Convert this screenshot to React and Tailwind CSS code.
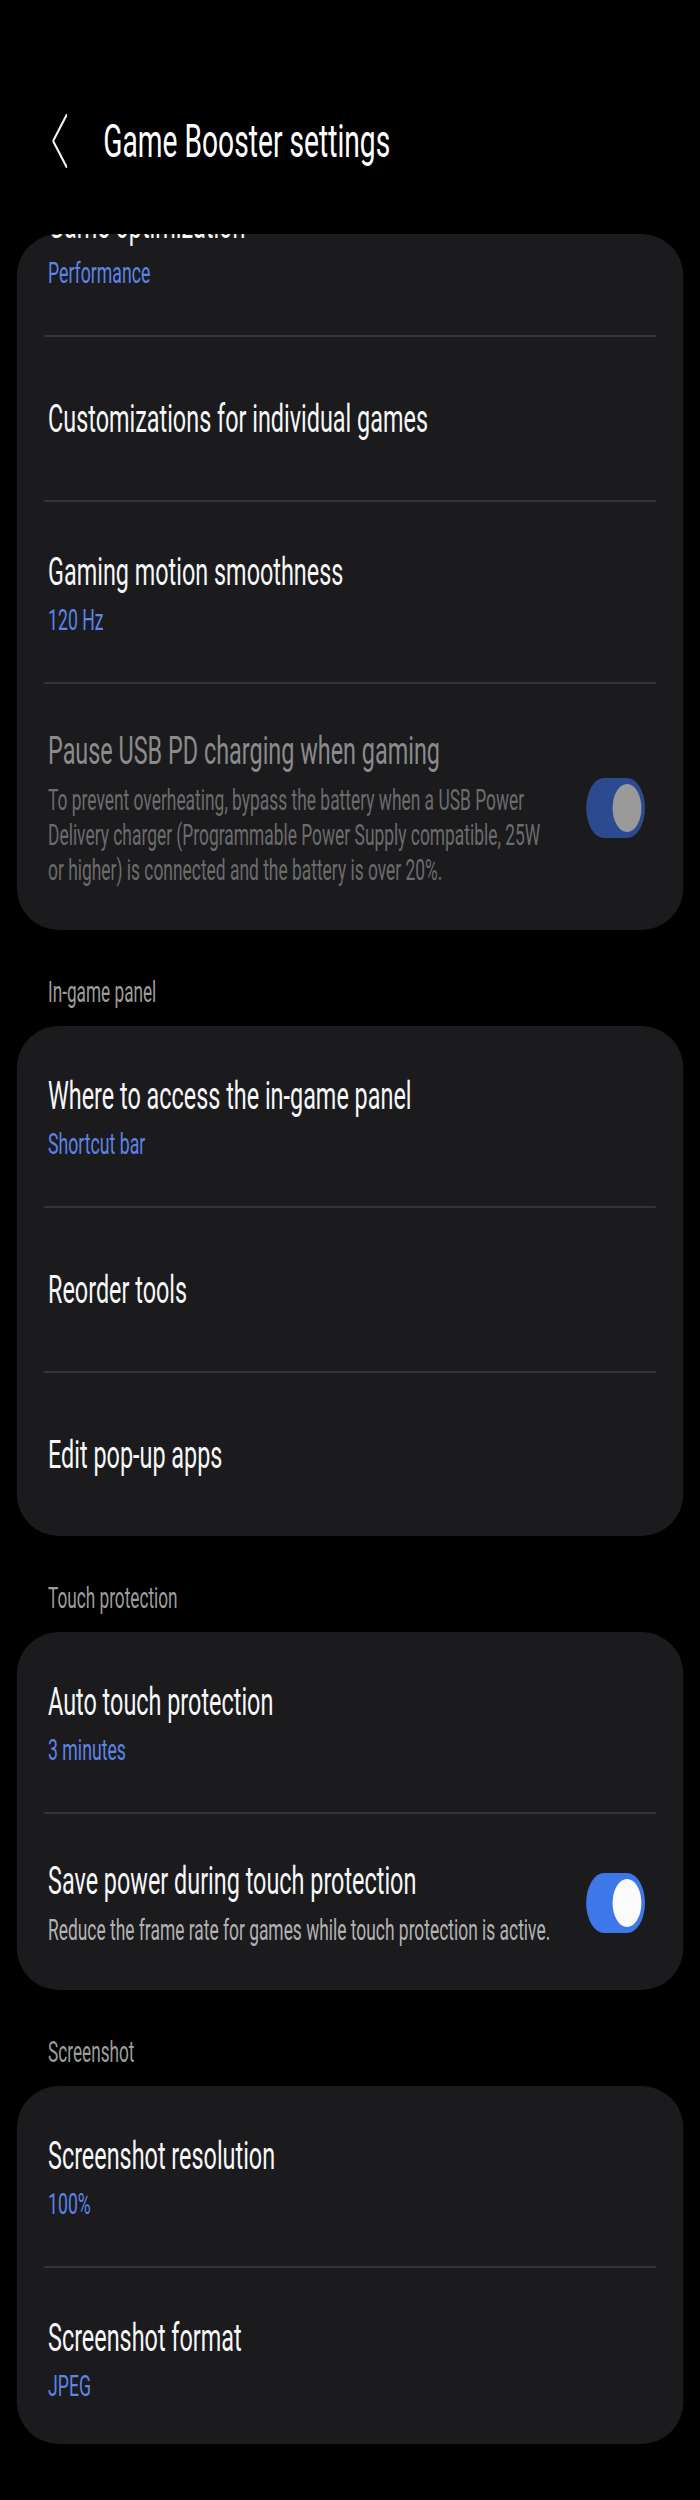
import React from 'react';

// the whole screen is drawn 1167px wide and squeezed to 700 (the reference is horizontally squashed)
const sections = [
  {
    header: null,
    clipTop: true,
    rows: [
      { title: 'Game optimization', value: 'Performance' },
      { title: 'Customizations for individual games' },
      { title: 'Gaming motion smoothness', value: '120 Hz' },
      {
        title: 'Pause USB PD charging when gaming',
        desc: 'To prevent overheating, bypass the battery when a USB Power Delivery charger (Programmable Power Supply compatible, 25W or higher) is connected and the battery is over 20%.',
        toggle: true,
        disabled: true,
      },
    ],
  },
  {
    header: 'In-game panel',
    rows: [
      { title: 'Where to access the in-game panel', value: 'Shortcut bar' },
      { title: 'Reorder tools' },
      { title: 'Edit pop-up apps' },
    ],
  },
  {
    header: 'Touch protection',
    rows: [
      { title: 'Auto touch protection', value: '3 minutes' },
      {
        title: 'Save power during touch protection',
        desc: 'Reduce the frame rate for games while touch protection is active.',
        toggle: true,
      },
    ],
  },
  {
    header: 'Screenshot',
    rows: [
      { title: 'Screenshot resolution', value: '100%' },
      { title: 'Screenshot format', value: 'JPEG', last: true },
    ],
  },
];

function Toggle({ disabled }) {
  return (
    <div
      className={`flex h-[60px] w-[98px] shrink-0 items-center justify-end rounded-full pr-[6px] ${
        disabled ? 'bg-[#2b4a90]' : 'bg-[#3d77ea]'
      }`}
    >
      <div className={`h-[48px] w-[48px] rounded-full ${disabled ? 'bg-[#9a9a9a]' : 'bg-[#fbfbfb]'}`} />
    </div>
  );
}

function Row({ title, value, desc, toggle, disabled, last }) {
  let pad = 'pt-[58px] pb-[57px]';
  if (desc) pad = 'pt-[43px] pb-[42px]';
  else if (value) pad = last ? 'pt-[46px] pb-[34px]' : 'pt-[46px] pb-[38px]';
  return (
    <div className={`flex items-center pl-[52px] pr-[64px] ${pad}`}>
      <div className="flex-1">
        <p className={`text-[39px] leading-[48px] ${disabled ? 'text-[#8b8b8b]' : 'text-[#f7f7f7]'}`}>{title}</p>
        {value && <p className="text-[29.5px] leading-[48px] text-[#5d84e6]">{value}</p>}
        {desc && (
          <p className={`mt-[8px] text-[29px] leading-[35px] ${disabled ? 'text-[#6c6c6c]' : 'text-[#b3b3b3]'}`}>
            {desc}
          </p>
        )}
      </div>
      {toggle && (
        <div className="ml-[53px]">
          <Toggle disabled={disabled} />
        </div>
      )}
    </div>
  );
}

function Card({ rows, clipTop }) {
  return (
    <div className="mx-[28px] overflow-hidden rounded-tl-[70px_42px] rounded-tr-[70px_42px] rounded-bl-[70px_42px] rounded-br-[70px_42px] bg-[#1b1b1e]">
      <div className={clipTop ? '-mt-[79px]' : ''}>
        {rows.map((r, i) => (
          <div key={r.title}>
            {i > 0 && <div className="mx-[46px] h-[2px] bg-[#353537]" />}
            <Row {...r} />
          </div>
        ))}
      </div>
    </div>
  );
}

export default function App() {
  return (
    <div className="min-h-[2500px] w-[700px] overflow-hidden bg-black font-[family-name:Roboto,'Noto_Sans',sans-serif]">
      <div className="w-[1167px] origin-top-left scale-x-[0.6]">
        {/* top bar */}
        <div className="mt-[113px] mb-[65px] flex h-[56px] items-center pl-[87px]">
          <svg width="25" height="54" viewBox="0 0 25 54" fill="none">
            <polyline points="24,1 1.5,27 24,53" stroke="#f2f2f2" strokeWidth="3" strokeLinecap="round" strokeLinejoin="round" />
          </svg>
          <h1 className="ml-[60px] text-[47px] leading-[56px] text-white">Game Booster settings</h1>
        </div>

        {sections.map((s, i) => (
          <div key={i}>
            {s.header && (
              <p className="pl-[80px] pt-[46px] pb-[18px] text-[28.7px] leading-[32px] text-[#9d9d9d]">{s.header}</p>
            )}
            <Card rows={s.rows} clipTop={s.clipTop} />
          </div>
        ))}
      </div>
    </div>
  );
}
